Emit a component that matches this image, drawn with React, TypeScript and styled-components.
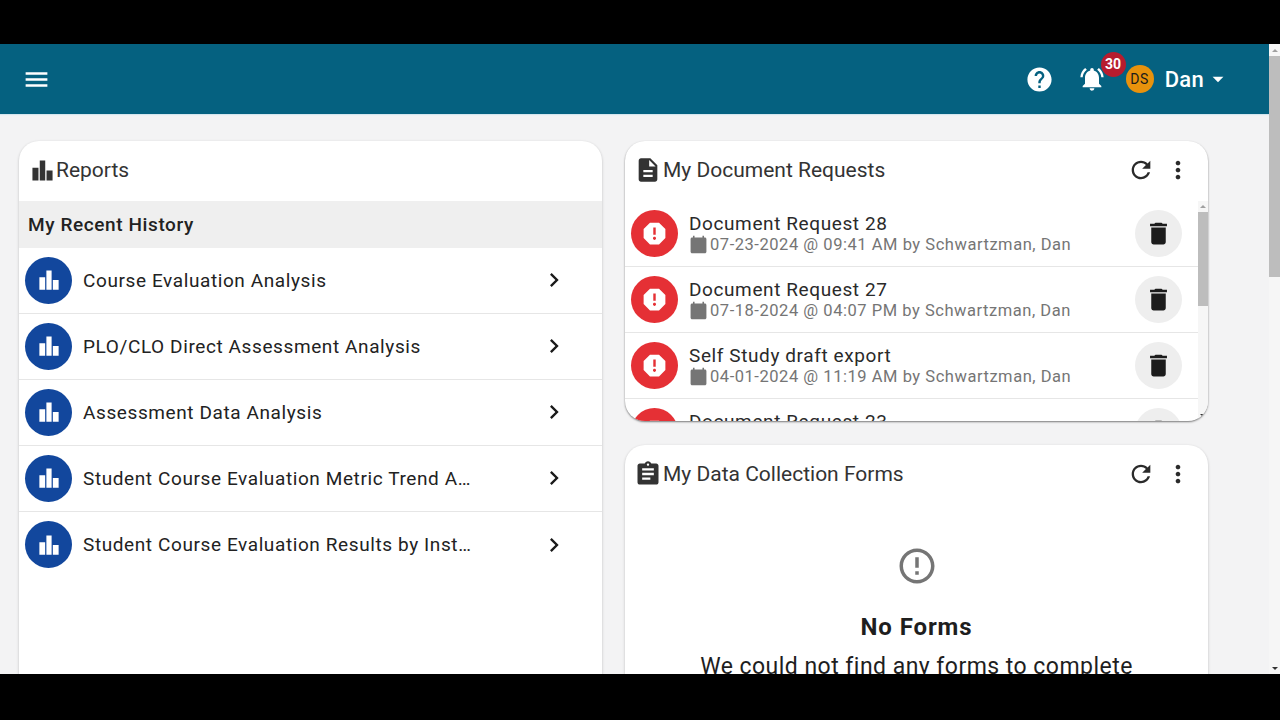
import React from 'react';
import styled, { createGlobalStyle } from 'styled-components';

const GlobalStyle = createGlobalStyle`
  html, body {
    margin: 0;
    height: 100%;
    background: #000;
    overflow: hidden;
  }
  * {
    box-sizing: border-box;
  }
`;

const Stage = styled.div`
  width: 1280px;
  height: 720px;
  padding: 44px 0 46px;
  background: #000;
  font-family: Roboto, "Liberation Sans", sans-serif;
`;

const Viewport = styled.div`
  display: flex;
  height: 630px;
  overflow: hidden;
  background: #f3f3f4;
`;

const Page = styled.div`
  flex: 1;
  min-width: 0;
  display: flex;
  flex-direction: column;
`;

const AppBar = styled.header`
  height: 70px;
  flex: none;
  display: flex;
  align-items: center;
  padding: 0 38px 0 22px;
  background: #056180;
  color: #fff;
  box-shadow: 0 1px 1px #d4e6ee;
`;

const Spacer = styled.div`
  flex: 1;
`;

const Glyph = styled.svg<{ $size: number; $color?: string }>`
  width: ${p => p.$size}px;
  height: ${p => p.$size}px;
  flex: none;
  display: block;
  fill: ${p => p.$color || 'currentColor'};
`;

const BellWrap = styled.div`
  position: relative;
  width: 28px;
  height: 28px;
  margin-left: 24px;
`;

const Badge = styled.span`
  position: absolute;
  left: 23px;
  top: -13px;
  width: 25px;
  height: 25px;
  border-radius: 50%;
  background: #b71c2e;
  color: #fff;
  font-size: 14px;
  font-weight: 700;
  line-height: 25px;
  text-align: center;
`;

const Avatar = styled.span`
  width: 28px;
  height: 28px;
  margin-left: 20px;
  border-radius: 50%;
  background: #e8920c;
  color: #1a1a1a;
  font-size: 14px;
  font-weight: 400;
  letter-spacing: 0.6px;
  line-height: 28px;
  text-align: center;
`;

const UserName = styled.span`
  margin: 0 1px 0 11px;
  font-size: 22px;
  font-weight: 500;
  letter-spacing: 0.3px;
`;

const Content = styled.main`
  flex: 1;
  min-height: 0;
  display: grid;
  grid-template-columns: 583px 583px;
  column-gap: 23px;
  align-items: start;
  padding: 27px 0 0 19px;
`;

const Column = styled.div`
  display: flex;
  flex-direction: column;
  gap: 24px;
`;

const Card = styled.section<{ $height: number; $raised?: boolean }>`
  height: ${p => p.$height}px;
  border-radius: 20px;
  background: #fff;
  box-shadow: ${p => (p.$raised ? '0 1px 2px rgba(0, 0, 0, 0.5)' : '0 1px 3px rgba(0, 0, 0, 0.22)')};
  overflow: hidden;
`;

const CardHeader = styled.div`
  height: 60px;
  display: flex;
  align-items: center;
  padding: 0 16px 2px 9px;
  color: #333;
  font-size: 21px;
`;

const CardTitle = styled.span`
  margin-left: 1px;
`;

const ReportsMark = styled.span`
  margin: 0 1px 0 3px;
`;

const HeaderButton = styled.span`
  width: 28px;
  height: 28px;
  margin-left: 9px;
  color: #2b2b2b;
`;

const SectionBand = styled.div`
  height: 47px;
  display: flex;
  align-items: center;
  padding-left: 9px;
  background: #efefef;
  color: #222;
  font-size: 19px;
  font-weight: 500;
  letter-spacing: 0.6px;
`;

const Row = styled.div<{ $lift?: boolean }>`
  height: 66px;
  display: flex;
  align-items: center;
  padding-left: 6px;
  padding-bottom: ${p => (p.$lift ? 1 : 0)}px;
  border-bottom: 1px solid #e6e6e6;

  ${Card} > &:last-child {
    border-bottom: none;
  }
`;

const RoundIcon = styled.span<{ $bg: string }>`
  width: 47px;
  height: 47px;
  flex: none;
  display: flex;
  align-items: center;
  justify-content: center;
  border-radius: 50%;
  background: ${p => p.$bg};
  color: #fff;
`;

const RowLabel = styled.span`
  width: 388px;
  margin-left: 11px;
  overflow: hidden;
  white-space: nowrap;
  text-overflow: ellipsis;
  color: #222;
  font-size: 19px;
  letter-spacing: 0.6px;
`;

const Chevron = styled.span`
  margin-left: 69px;
  color: #1a1a1a;
`;

const ListFrame = styled.div`
  display: flex;
  height: 220px;
`;

const DocList = styled.div`
  flex: 1;
  min-width: 0;
  overflow: hidden;
`;

const DocText = styled.div`
  flex: 1;
  min-width: 0;
  margin-left: 11px;
`;

const DocTitle = styled.div`
  color: #2a2a2a;
  font-size: 19px;
  line-height: 22px;
  letter-spacing: 0.6px;
`;

const DocMeta = styled.div`
  display: flex;
  align-items: center;
  gap: 2px;
  color: #757575;
  font-size: 16.5px;
  line-height: 20px;
  letter-spacing: 0.54px;
  white-space: nowrap;
`;

const DeleteButton = styled.span`
  width: 47px;
  height: 47px;
  flex: none;
  margin-right: 16px;
  display: flex;
  align-items: center;
  justify-content: center;
  border-radius: 50%;
  background: #eeeeee;
  color: #1c1c1c;
`;

const Track = styled.div<{ $width: number; $pad?: number }>`
  width: ${p => p.$width}px;
  flex: none;
  display: flex;
  flex-direction: column;
  align-items: center;
  padding-top: ${p => p.$pad || 0}px;
  background: #f6f6f6;
`;

const Arrow = styled.span<{ $down?: boolean }>`
  flex: none;
  margin: 4px 0;
  border-left: 3px solid transparent;
  border-right: 3px solid transparent;
  ${p => (p.$down ? 'border-top: 3px solid #333;' : 'border-bottom: 3px solid #a0a0a0;')}
`;

const Thumb = styled.div<{ $height: number }>`
  width: 100%;
  height: ${p => p.$height}px;
  flex: none;
  background: #bdbdbd;
`;

const TrackGap = styled.div`
  flex: 1;
`;

const EmptyState = styled.div`
  display: flex;
  flex-direction: column;
  align-items: center;
  padding-top: 40px;
  color: #1e1e1e;
`;

const EmptyTitle = styled.div`
  margin-top: 26px;
  font-size: 24px;
  font-weight: 700;
  letter-spacing: 0.9px;
  line-height: 28px;
`;

const EmptyText = styled.div`
  margin-top: 12px;
  font-size: 23px;
  line-height: 28px;
  letter-spacing: 0.47px;
  white-space: nowrap;
`;

const icons = {
  menu: 'M3 18h18v-2H3v2zm0-5h18v-2H3v2zm0-7v2h18V6H3z',
  help: 'M12 2C6.48 2 2 6.48 2 12s4.48 10 10 10 10-4.48 10-10S17.52 2 12 2zm1 17h-2v-2h2v2zm2.07-7.75l-.9.92C13.45 12.9 13 13.5 13 15h-2v-.5c0-1.1.45-2.1 1.17-2.83l1.24-1.26c.37-.36.59-.86.59-1.41 0-1.1-.9-2-2-2s-2 .9-2 2H8c0-2.21 1.79-4 4-4s4 1.79 4 4c0 .88-.36 1.68-.93 2.25z',
  bell: 'M7.58 4.08L6.15 2.65C3.75 4.48 2.17 7.3 2.03 10.5h2c.15-2.65 1.51-4.97 3.55-6.42zm12.39 6.42h2c-.15-3.2-1.73-6.02-4.12-7.85l-1.42 1.43c2.02 1.45 3.39 3.77 3.54 6.42zM18 11c0-3.07-1.64-5.64-4.5-6.32V4c0-.83-.67-1.5-1.5-1.5s-1.5.67-1.5 1.5v.68C7.63 5.36 6 7.92 6 11v5l-2 2v1h16v-1l-2-2v-5zm-6 11c.14 0 .27-.01.4-.04.65-.14 1.18-.58 1.44-1.18.1-.24.15-.5.15-.78h-4c.01 1.1.9 2 2.01 2z',
  dropdown: 'M7 10l5 5 5-5z',
  chart: 'M5 10h4.2v9H5zM10.1 5h3.8v14h-3.8zM14.8 12H19v7h-4.2z',
  doc: 'M14 2H6c-1.1 0-1.99.9-1.99 2L4 20c0 1.1.89 2 1.99 2H18c1.1 0 2-.9 2-2V8l-6-6zm2 16H8v-2h8v2zm0-4H8v-2h8v2zm-3-5V3.5L18.5 9H13z',
  refresh: 'M17.65 6.35C16.2 4.9 14.21 4 12 4c-4.42 0-7.99 3.58-7.99 8s3.57 8 7.99 8c3.73 0 6.84-2.55 7.73-6h-2.08c-.82 2.33-3.04 4-5.65 4-3.31 0-6-2.69-6-6s2.69-6 6-6c1.66 0 3.14.69 4.22 1.78L13 11h7V4l-2.35 2.35z',
  more: 'M12 8c1.1 0 2-.9 2-2s-.9-2-2-2-2 .9-2 2 .9 2 2 2zm0 2c-1.1 0-2 .9-2 2s.9 2 2 2 2-.9 2-2-.9-2-2-2zm0 6c-1.1 0-2 .9-2 2s.9 2 2 2 2-.9 2-2-.9-2-2-2z',
  report: 'M15.73 3H8.27L3 8.27v7.46L8.27 21h7.46L21 15.73V8.27L15.73 3zM12 17.3c-.72 0-1.3-.58-1.3-1.3 0-.72.58-1.3 1.3-1.3.72 0 1.3.58 1.3 1.3 0 .72-.58 1.3-1.3 1.3zm1-4.3h-2V7h2v6z',
  calendar: 'M20 3h-1V1h-2v2H7V1H5v2H4c-1.1 0-2 .9-2 2v16c0 1.1.9 2 2 2h16c1.1 0 2-.9 2-2V5c0-1.1-.9-2-2-2z',
  trash: 'M6 19c0 1.1.9 2 2 2h8c1.1 0 2-.9 2-2V7H6v12zM19 4h-3.5l-1-1h-5l-1 1H5v2h14V4z',
  clipboard: 'M19 3h-4.18C14.4 1.84 13.3 1 12 1c-1.3 0-2.4.84-2.82 2H5c-1.1 0-2 .9-2 2v14c0 1.1.9 2 2 2h14c1.1 0 2-.9 2-2V5c0-1.1-.9-2-2-2zm-7 0c.55 0 1 .45 1 1s-.45 1-1 1-1-.45-1-1 .45-1 1-1zm2 14H7v-2h7v2zm3-4H7v-2h10v2zm0-4H7V7h10v2z',
  chevron: 'M10 6L8.59 7.41 13.17 12l-4.58 4.59L10 18l6-6z',
  alert: 'M11 15h2v2h-2zm0-8h2v6h-2zm.99-5C6.47 2 2 6.48 2 12s4.47 10 9.99 10C17.52 22 22 17.52 22 12S17.52 2 11.99 2zM12 20c-4.42 0-8-3.58-8-8s3.58-8 8-8 8 3.58 8 8-3.58 8-8 8z',
};

// box crops the 24 unit grid, the bar chart sits tight in its frame in the reference
const Icon = ({
  name,
  size = 24,
  color,
  box = '0 0 24 24',
}: {
  name: keyof typeof icons;
  size?: number;
  color?: string;
  box?: string;
}) => (
  <Glyph viewBox={box} $size={size} $color={color}>
    <path d={icons[name]} />
  </Glyph>
);

const reports = [
  'Course Evaluation Analysis',
  'PLO/CLO Direct Assessment Analysis',
  'Assessment Data Analysis',
  'Student Course Evaluation Metric Trend Analysis',
  'Student Course Evaluation Results by Institution',
];

const requests = [
  { title: 'Document Request 28', date: '07-23-2024 @ 09:41 AM by Schwartzman, Dan' },
  { title: 'Document Request 27', date: '07-18-2024 @ 04:07 PM by Schwartzman, Dan' },
  { title: 'Self Study draft export', date: '04-01-2024 @ 11:19 AM by Schwartzman, Dan' },
  { title: 'Document Request 23', date: '03-14-2024 @ 10:02 AM by Schwartzman, Dan' },
];

export default function App() {
  return (
    <Stage>
      <GlobalStyle />
      <Viewport>
        <Page>
          <AppBar>
            <Icon name="menu" size={29} />
            <Spacer />
            <Icon name="help" size={29} />
            <BellWrap>
              <Icon name="bell" size={28} />
              <Badge>30</Badge>
            </BellWrap>
            <Avatar>DS</Avatar>
            <UserName>Dan</UserName>
            <Icon name="dropdown" size={26} />
          </AppBar>
          <Content>
            <Card $height={600}>
              <CardHeader>
                <ReportsMark>
                  <Icon name="chart" size={23} box="4 4 16 16" />
                </ReportsMark>
                <CardTitle>Reports</CardTitle>
              </CardHeader>
              <SectionBand>My Recent History</SectionBand>
              {reports.map(title => (
                <Row key={title} $lift>
                  <RoundIcon $bg="#12479d">
                    <Icon name="chart" size={22} box="4 4 16 16" />
                  </RoundIcon>
                  <RowLabel>{title}</RowLabel>
                  <Chevron>
                    <Icon name="chevron" size={28} />
                  </Chevron>
                </Row>
              ))}
            </Card>
            <Column>
              <Card $height={280} $raised>
                <CardHeader>
                  <Icon name="doc" size={28} />
                  <CardTitle>My Document Requests</CardTitle>
                  <Spacer />
                  <HeaderButton>
                    <Icon name="refresh" size={28} />
                  </HeaderButton>
                  <HeaderButton>
                    <Icon name="more" size={28} />
                  </HeaderButton>
                </CardHeader>
                <ListFrame>
                  <DocList>
                    {requests.map(item => (
                      <Row key={item.title}>
                        <RoundIcon $bg="#e53035">
                          <Icon name="report" size={29} />
                        </RoundIcon>
                        <DocText>
                          <DocTitle>{item.title}</DocTitle>
                          <DocMeta>
                            <Icon name="calendar" size={19} color="#757575" />
                            {item.date}
                          </DocMeta>
                        </DocText>
                        <DeleteButton>
                          <Icon name="trash" size={29} />
                        </DeleteButton>
                      </Row>
                    ))}
                  </DocList>
                  <Track $width={10}>
                    <Arrow />
                    <Thumb $height={94} />
                    <TrackGap />
                    <Arrow $down />
                  </Track>
                </ListFrame>
              </Card>
              <Card $height={260}>
                <CardHeader>
                  <Icon name="clipboard" size={28} />
                  <CardTitle>My Data Collection Forms</CardTitle>
                  <Spacer />
                  <HeaderButton>
                    <Icon name="refresh" size={28} />
                  </HeaderButton>
                  <HeaderButton>
                    <Icon name="more" size={28} />
                  </HeaderButton>
                </CardHeader>
                <EmptyState>
                  <Icon name="alert" size={42} color="#757575" />
                  <EmptyTitle>No Forms</EmptyTitle>
                  <EmptyText>We could not find any forms to complete</EmptyText>
                </EmptyState>
              </Card>
            </Column>
          </Content>
        </Page>
        <Track $width={11} $pad={1}>
          <Arrow />
          <Thumb $height={221} />
          <TrackGap />
          <Arrow $down />
        </Track>
      </Viewport>
    </Stage>
  );
}
